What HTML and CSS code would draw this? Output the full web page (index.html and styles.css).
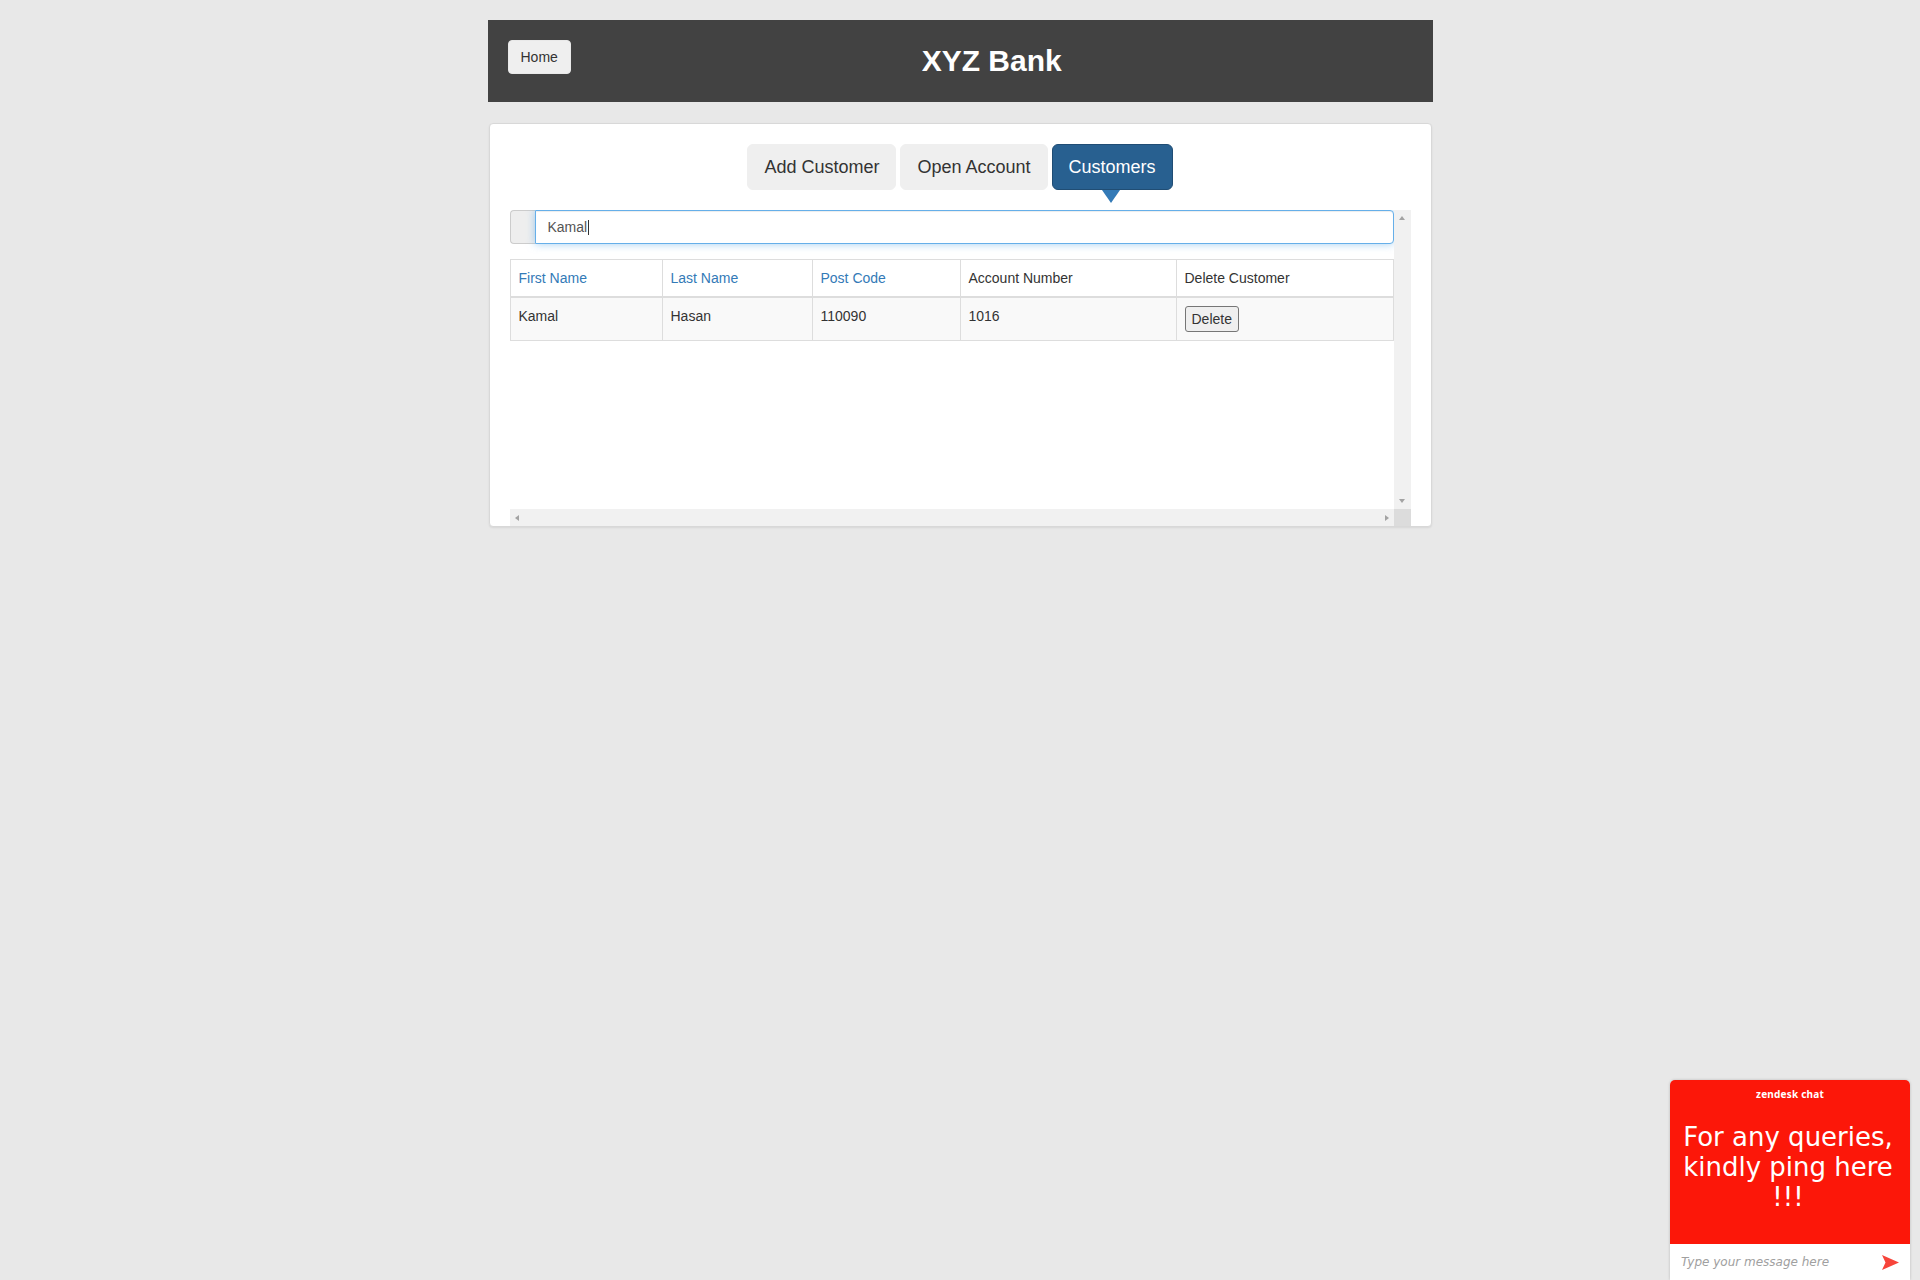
FILE: index.html
```html
<!DOCTYPE html>
<html lang="en">
<head>
<meta charset="utf-8">
<title>XYZ Bank</title>
<link rel="stylesheet" href="styles.css">
</head>
<body>
<header class="header">
  <button class="btn-home">Home</button>
  <h2 class="title">XYZ Bank</h2>
</header>

<main class="main-box">
  <div class="tabs">
    <button class="tab">Add Customer</button>
    <button class="tab">Open Account</button>
    <button class="tab active">Customers</button>
  </div>

  <div class="scroller">
    <div class="content">
      <div class="input-group">
        <span class="addon"></span>
        <input class="search" type="text" value="Kamal">
        <span class="caret"></span>
      </div>
      <table class="grid">
        <colgroup>
          <col class="c1"><col class="c2"><col class="c3"><col class="c4"><col>
        </colgroup>
        <thead>
          <tr>
            <td><a class="sort" href="#">First Name</a></td>
            <td><a class="sort" href="#">Last Name</a></td>
            <td><a class="sort" href="#">Post Code</a></td>
            <td>Account Number</td>
            <td>Delete Customer</td>
          </tr>
        </thead>
        <tbody>
          <tr>
            <td>Kamal</td>
            <td>Hasan</td>
            <td>110090</td>
            <td>1016</td>
            <td><button class="btn-delete">Delete</button></td>
          </tr>
        </tbody>
      </table>
    </div>
    <div class="vbar"><span class="arr up"></span><span class="arr down"></span></div>
    <div class="hbar"><span class="arr left"></span><span class="arr right"></span></div>
    <div class="corner"></div>
  </div>
</main>

<aside class="chat">
  <div class="chat-top">
    <div class="chat-brand">zendesk chat</div>
    <div class="chat-msg">For any queries, kindly ping here !!!</div>
  </div>
  <div class="chat-input">
    <span class="chat-placeholder">Type your message here</span>
    <svg class="send" width="17" height="15" viewBox="0 0 17 15"><polygon points="0,0 17,7.5 0,15 3.5,7.5" fill="#f7443a"/></svg>
  </div>
</aside>
</body>
</html>
```

FILE: styles.css
```css
html, body {
  margin: 0;
  padding: 0;
}
body {
  background: #e8e8e8;
  font-family: "Liberation Sans", Arial, sans-serif;
  font-size: 14px;
  line-height: 20px;
  color: #333;
  min-height: 1280px;
}

/* Header */
.header {
  width: 945px;
  height: 82px;
  box-sizing: border-box;
  margin: 20px auto 0;
  padding: 20px 20px 0;
  background: #424242;
  display: flex;
  align-items: flex-start;
}
.btn-home {
  height: 34px;
  box-sizing: border-box;
  padding: 6px 12px;
  font: 14px/20px "Liberation Sans", Arial, sans-serif;
  color: #333;
  background: #efefef;
  border: 1px solid #e9e9e9;
  border-radius: 4px;
}
.title {
  flex: 1;
  margin: 4px 0 0;
  text-align: center;
  font: bold 30px/33px "Liberation Sans", Arial, sans-serif;
  color: #fff;
}

/* Main box */
.main-box {
  width: 943px;
  box-sizing: border-box;
  margin: 21px auto 0;
  padding: 20px 20px 0;
  background: #fff;
  border: 1px solid #d8d8d8;
  border-radius: 4px;
  box-shadow: 0 1px 2px rgba(0, 0, 0, 0.08);
}

.tabs {
  display: flex;
  justify-content: center;
  gap: 4px;
}
.tab {
  position: relative;
  padding: 10px 16px;
  font: 18px/24px "Liberation Sans", Arial, sans-serif;
  color: #333;
  background: #efefef;
  border: 1px solid #efefef;
  border-radius: 6px;
}
.tab.active {
  color: #fff;
  background: #286090;
  border-color: #204d74;
}
.tab.active::after {
  content: "";
  position: absolute;
  left: 50%;
  top: calc(100% + 1px);
  margin-left: -10px;
  border-left: 9px solid transparent;
  border-right: 9px solid transparent;
  border-top: 13px solid #337ab7;
}

/* Scroll area */
.scroller {
  margin-top: 20px;
  display: grid;
  grid-template-columns: 1fr 17px;
  grid-template-rows: 299px 17px;
}
.content {
  overflow: hidden;
}
.input-group {
  position: relative;
  display: flex;
  height: 34px;
  margin-bottom: 15px;
}
.addon {
  width: 25px;
  box-sizing: border-box;
  background: #eee;
  border: 1px solid #ccc;
  border-right: 0;
  border-radius: 4px 0 0 4px;
}
.search {
  flex: 1;
  min-width: 0;
  height: 34px;
  box-sizing: border-box;
  margin: 0;
  padding: 6px 12px;
  font: 14px/20px "Liberation Sans", Arial, sans-serif;
  color: #555;
  background: #fff;
  border: 1px solid #66afe9;
  border-radius: 0 4px 4px 0;
  outline: none;
  box-shadow: inset 0 1px 1px rgba(0, 0, 0, 0.075), 0 0 8px rgba(102, 175, 233, 0.6);
}
.caret {
  position: absolute;
  left: 78px;
  top: 10px;
  width: 1px;
  height: 15px;
  background: #333;
}

.grid {
  width: 100%;
  table-layout: fixed;
  border-collapse: collapse;
  border: 1px solid #ddd;
}
.c1 { width: 152px; }
.c2 { width: 150px; }
.c3 { width: 148px; }
.c4 { width: 216px; }
.grid td {
  padding: 8px;
  border: 1px solid #ddd;
  text-align: left;
  vertical-align: top;
  line-height: 20px;
}
.grid thead td {
  border-bottom: 2px solid #ddd;
  background: #fff;
}
.grid tbody tr {
  background: #f9f9f9;
}
.sort {
  color: #337ab7;
  text-decoration: none;
}
.btn-delete {
  margin: 0;
  padding: 2px 6px;
  font: 14px/20px "Liberation Sans", Arial, sans-serif;
  color: #333;
  background: #efefef;
  border: 1px solid #767676;
  border-radius: 3px;
}

/* Fake scrollbars */
.vbar {
  background: #f1f1f1;
  display: flex;
  flex-direction: column;
  justify-content: space-between;
  align-items: center;
  padding: 6px 0;
  box-sizing: border-box;
}
.hbar {
  background: #f1f1f1;
  display: flex;
  justify-content: space-between;
  align-items: center;
  padding: 0 5px;
}
.corner {
  background: #dcdcdc;
}
.arr {
  width: 0;
  height: 0;
}
.arr.up {
  border-left: 3.5px solid transparent;
  border-right: 3.5px solid transparent;
  border-bottom: 4px solid #a3a3a3;
}
.arr.down {
  border-left: 3.5px solid transparent;
  border-right: 3.5px solid transparent;
  border-top: 4px solid #a3a3a3;
}
.arr.left {
  border-top: 3.5px solid transparent;
  border-bottom: 3.5px solid transparent;
  border-right: 4px solid #a3a3a3;
}
.arr.right {
  border-top: 3.5px solid transparent;
  border-bottom: 3.5px solid transparent;
  border-left: 4px solid #a3a3a3;
}

/* Chat widget */
.chat {
  position: fixed;
  right: 10px;
  bottom: 0;
  width: 240px;
  border-radius: 5px 5px 0 0;
  overflow: hidden;
  box-shadow: 0 0 3px rgba(0, 0, 0, 0.2);
}
.chat-top {
  height: 164px;
  box-sizing: border-box;
  padding-top: 7px;
  background: #fc1709;
  color: #fff;
  text-align: center;
}
.chat-brand {
  font: bold 10px/14px "Noto Sans", sans-serif;
  letter-spacing: 0.2px;
}
.chat-msg {
  margin-top: 21px;
  padding: 0 8px 0 4px;
  font: 26px/30px "DejaVu Sans", Verdana, sans-serif;
}
.chat-input {
  height: 36px;
  display: flex;
  align-items: center;
  padding: 0 11px 0 11px;
  background: #fff;
}
.chat-placeholder {
  flex: 1;
  font: italic 12px "DejaVu Sans", Verdana, sans-serif;
  color: #a0a0a0;
}
.send {
  display: block;
}
```
